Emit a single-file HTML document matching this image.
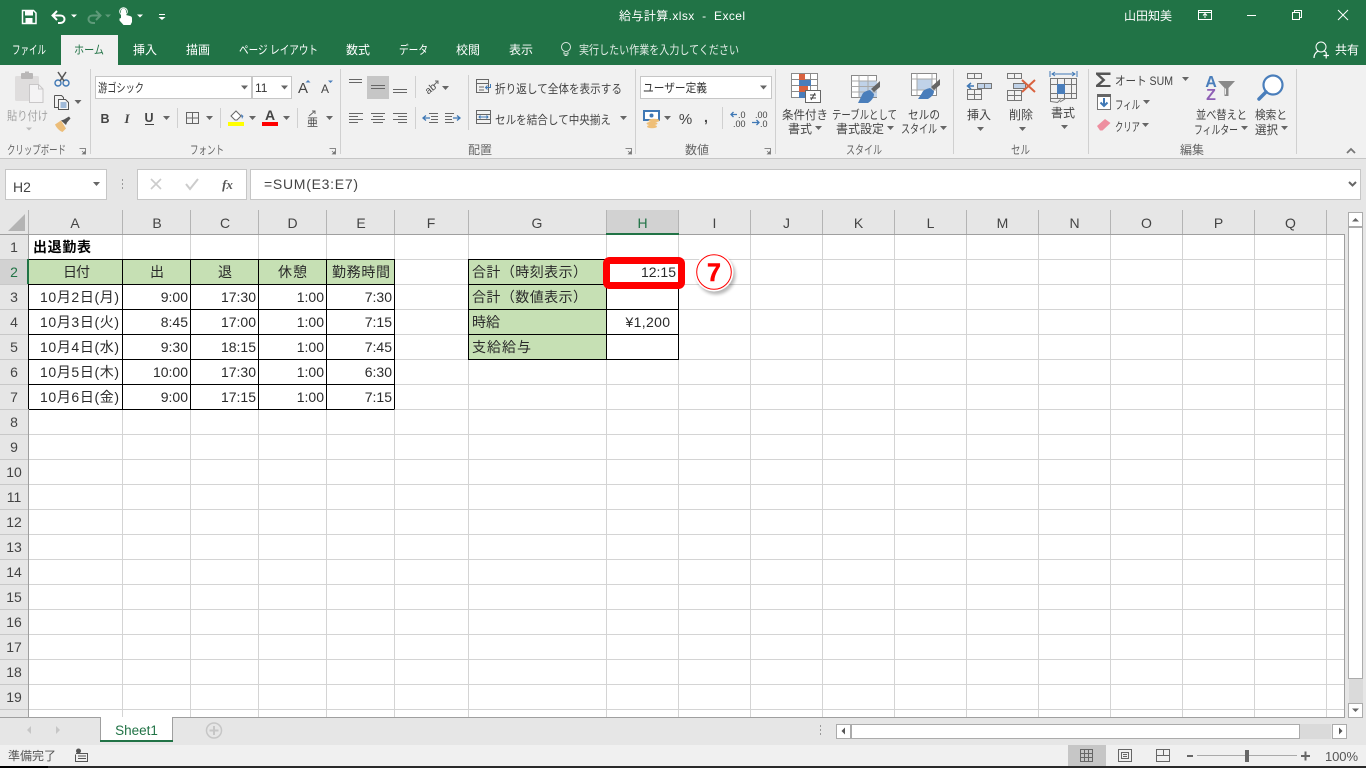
<!DOCTYPE html>
<html lang="ja"><head><meta charset="utf-8"><title>給与計算.xlsx - Excel</title>
<style>
html,body{margin:0;padding:0;width:1366px;height:768px;overflow:hidden;background:#fff}
svg{display:block;position:absolute;left:0;top:0}
text{font-family:"Liberation Sans","Noto Sans CJK JP",sans-serif;font-size:12px;fill:#444;white-space:pre}
.w text,text.w{fill:#fff}
.c{font-size:14px;fill:#2a2a2a}
.r{text-anchor:end}
.m{text-anchor:middle}
.h{font-size:14px;fill:#444;text-anchor:middle}
.s{fill:none;stroke:#666;stroke-width:1}
.l{fill:none;stroke:#666;stroke-width:1}
</style></head><body>
<svg width="1366" height="768" viewBox="0 0 1366 768" xmlns="http://www.w3.org/2000/svg">
<defs>
<path id="d" d="M-3.5-2h7L0 2z" fill="#666"/>
<path id="dl" d="M-3-1.500h6L0 1.500z" fill="#fff"/>
<g id="lc"><path d="M.5.500h6v6" fill="none" stroke="#888"/><path d="M3 3l3 3M6 3.500V6H3.500z" fill="#777" stroke="#777" stroke-width=".8"/></g>
<filter id="sh" x="-30%" y="-30%" width="160%" height="160%"><feGaussianBlur stdDeviation="1.500"/></filter>
</defs>

<!-- base -->
<rect width="1366" height="768" fill="#e6e6e6"/>
<rect width="1366" height="65" fill="#217346"/>
<rect y="65" width="1366" height="93" fill="#f1f1f1"/>
<rect y="158" width="1366" height="1" fill="#c6c6c6"/>
<rect x="61" y="35" width="57" height="31" fill="#f1f1f1"/>

<!-- QAT -->
<g>
<path d="M22.500 10.500h11l2.500 2.500v10.500H22.500z" fill="none" stroke="#fff" stroke-width="1.500"/>
<rect x="25" y="11" width="8" height="4.500" fill="#fff"/><rect x="25.500" y="18" width="7" height="5.500" fill="#fff"/>
<path d="M57 11l-4.500 4.500 4.500 4.500M53 15.500h7c3 0 4.500 1.800 4.500 3.700s-1.500 3.800-4.500 3.800h-2" fill="none" stroke="#fff" stroke-width="2"/>
<use href="#dl" x="74" y="16"/>
<path d="M96 11l4.500 4.500-4.500 4.500M100 15.500h-7c-3 0-4.500 1.800-4.500 3.700s1.500 3.800 4.500 3.800h2" fill="none" stroke="#5e9a79" stroke-width="2"/>
<path d="M105 14.500h6l-3 3z" fill="#5e9a79"/>
<path d="M121 18v-7a2.500 2.500 0 0 1 5 0v4l4 1c1.500.5 2 1 2 2.500v3.500l-1.500 3h-7l-4-4.500v-2z" fill="#fff"/>
<circle cx="123.500" cy="11.500" r="3.800" fill="none" stroke="#fff"/>
<use href="#dl" x="140" y="16"/>
<rect x="159" y="14" width="6" height="1" fill="#fff"/><path d="M158.500 17h7l-3.500 3z" fill="#fff"/>
</g>
<text class="w" x="619" y="20" textLength="126" lengthAdjust="spacing">給与計算.xlsx  -  Excel</text>
<text class="w" x="1124" y="20" textLength="48">山田知美</text>
<g fill="none" stroke="#fff">
<path d="M1198.500 10.500h13v9h-13zM1198.500 12.500h13M1205 18v-4M1203 15.500l2-2 2 2"/>
<path d="M1247 15.500h9"/>
<path d="M1292.500 12.500h7v7h-7zM1294.500 12.500v-2h7v7h-2"/>
<path d="M1338 10l10 10M1348 10l-10 10"/>
<circle cx="1321" cy="47" r="5"/>
<path d="M1314 58c0-4 2.500-6 4-7M1324 51c1 .5 2 1 2.500 2M1323.500 55.500h5.500M1326.200 53v5.500" stroke-width="1.200"/>
<circle cx="566" cy="47" r="4.500" stroke="#d9e7df"/><path d="M564 52v2h4v-2M564.500 55.500h3" stroke="#d9e7df"/>
</g>

<!-- tabs -->
<text class="w" x="12" y="54" textLength="34" lengthAdjust="spacingAndGlyphs">ファイル</text>
<text x="74" y="54" textLength="30" lengthAdjust="spacingAndGlyphs" style="fill:#217346">ホーム</text>
<text class="w" x="133" y="54" textLength="24">挿入</text>
<text class="w" x="186" y="54" textLength="24">描画</text>
<text class="w" x="239" y="54" textLength="79" lengthAdjust="spacingAndGlyphs">ページ レイアウト</text>
<text class="w" x="346" y="54" textLength="24">数式</text>
<text class="w" x="399" y="54" textLength="29" lengthAdjust="spacingAndGlyphs">データ</text>
<text class="w" x="456" y="54" textLength="24">校閲</text>
<text class="w" x="509" y="54" textLength="24">表示</text>
<text x="579" y="54" textLength="160" lengthAdjust="spacingAndGlyphs" style="fill:#e2ece6">実行したい作業を入力してください</text>
<text class="w" x="1335" y="54" textLength="24">共有</text>

<!-- group separators -->
<path d="M90.500 69v85M340.500 69v85M635.500 69v85M775.500 69v85M953.500 69v85M1088.500 69v85M1296.500 69v85" stroke="#d0d0d0"/>
<path d="M177.500 108v20M220.500 108v20M297.500 108v20M415.500 76v22M415.500 107v22M468.500 75v55M722.500 107v22" stroke="#d0d0d0"/>

<!-- clipboard -->
<rect x="15" y="76" width="24" height="25" rx="1.500" fill="#dfdddd"/>
<rect x="21" y="73" width="12" height="6" rx="1" fill="#b9b7b7"/><rect x="25" y="71.500" width="4" height="3" fill="#b9b7b7"/>
<path d="M29.500 84.500h9l4.500 4.500v13.500H29.500z" fill="#f4f3f4" stroke="#c9c7c8"/><path d="M38.500 84.500v4.500h4.500" fill="none" stroke="#c9c7c8"/>
<text x="7" y="120" textLength="41" lengthAdjust="spacingAndGlyphs" style="fill:#a3a3a3">貼り付け</text>
<path d="M26 127.500h6l-3 3z" fill="#bbb"/>
<g fill="none">
<circle cx="58" cy="83" r="3" stroke="#3f78b5" stroke-width="1.400"/><circle cx="66" cy="83" r="3" stroke="#3f78b5" stroke-width="1.400"/>
<path d="M58 72l6 9M66 72l-6 9" stroke="#555" stroke-width="1.500"/>
<path d="M54.500 95.500h7l2 2v2M54.500 95.500v12h4" stroke="#555"/>
<path d="M58.500 99.500h7l3 3v7h-10z" stroke="#555" fill="#f7f7f7"/>
<path d="M60.500 103h6M60.500 105h6M60.500 107h6" stroke="#4a7ebb"/>
</g>
<use href="#d" x="78" y="102"/>
<path d="M55 124.500l6-4 5 8-3.500 3.500c-3-1-6-4-7.500-7.500z" fill="#ecbd79"/>
<path d="M61 120.500l3-1 5-3 1.500 2-3.500 4-1 2.500z" fill="#555"/>
<text x="7" y="154" textLength="59" lengthAdjust="spacingAndGlyphs" style="fill:#666">クリップボード</text>
<use href="#lc" x="79" y="148"/>

<!-- font -->
<rect x="95.500" y="76.500" width="156" height="22" fill="#fff" stroke="#c6c6c6"/>
<rect x="252.500" y="76.500" width="39" height="22" fill="#fff" stroke="#c6c6c6"/>
<text x="98" y="92" textLength="46" lengthAdjust="spacingAndGlyphs" style="fill:#333">游ゴシック</text>
<text x="255" y="92" style="fill:#333">11</text>
<use href="#d" x="244.500" y="87.500"/><use href="#d" x="284.500" y="87.500"/>
<text x="303" y="93" class="m" style="font-size:15px">A</text><path d="M305.500 82.500h5l-2.500-2.500z" fill="#4a7ebb"/>
<text x="325" y="93" class="m" style="font-size:12px">A</text><path d="M328 80.500h5l-2.500 2.500z" fill="#4a7ebb"/>
<text x="105" y="123" class="m" style="font-weight:bold;font-size:12.500px">B</text>
<text x="127" y="123" class="m" style="font-style:italic;font-weight:bold;font-family:'Liberation Serif',serif;font-size:13px">I</text>
<text x="149" y="122" class="m" style="font-weight:bold;font-size:12.500px">U</text><rect x="145" y="124" width="9" height="1" fill="#444"/>
<use href="#d" x="166.500" y="118"/>
<path d="M186.500 112.500h12v11h-12zM192.500 112.500v11M186.500 118h12" class="s"/>
<use href="#d" x="209.500" y="118"/>
<path d="M231 116l5-5 5 5-4 4h-2z" fill="#fff" stroke="#666"/><path d="M241 114l2.500 2-1.500 3z" fill="#4a7ebb"/>
<rect x="228" y="122" width="16" height="4" fill="#ffff00"/>
<use href="#d" x="252.500" y="118"/>
<text x="270" y="120" class="m" style="font-weight:bold;font-size:14px">A</text>
<rect x="262" y="122" width="16" height="4" fill="#ff0000"/>
<use href="#d" x="286.500" y="118"/>
<path d="M309 116l6-5M312 111h3v3" class="s"/><text x="312.500" y="126" class="m" style="font-size:11px">亜</text>
<use href="#d" x="329.500" y="118"/>
<text x="190" y="154" textLength="34" lengthAdjust="spacingAndGlyphs" style="fill:#666">フォント</text>
<use href="#lc" x="329" y="148"/>

<!-- alignment -->
<rect x="367" y="76" width="22" height="23" fill="#c6c6c6"/>
<path d="M349 79.500h13M349 82.500h13M371 85.500h14M371 88.500h14M393 89.500h14M393 92.500h14M349 113.500h14M349 116.500h9M349 119.500h14M349 122.500h9M371 113.500h14M373 116.500h10M371 119.500h14M373 122.500h10M393 113.500h14M398 116.500h9M393 119.500h14M398 122.500h9" class="l"/>
<text x="430" y="92" class="m" transform="rotate(-40 430 88)" style="font-size:10px">ab</text>
<path d="M434 85l4-4M435 81h3v3" class="s"/>
<use href="#d" x="445.500" y="88"/>
<path d="M429 113.500h9M431 116.500h7M431 119.500h7M429 122.500h9" class="l"/><path d="M423 118h7M426 115.500l-3 2.500 3 2.500" fill="none" stroke="#3f78b5" stroke-width="1.300"/>
<path d="M451 113.500h9M451 116.500h7M451 119.500h7M451 122.500h9" class="l" transform="translate(-6 0)"/><path d="M453 118h7M457 115.500l3 2.500-3 2.500" fill="none" stroke="#3f78b5" stroke-width="1.300"/>
<path d="M476.500 79.500h12v13h-12zM476.500 83.500h12M479 87h5M479 90h5" class="s"/><path d="M490.500 84v3.500h-5M487.500 85.500l-2 2 2 2" fill="none" stroke="#3f78b5"/>
<text x="495" y="93" textLength="127" lengthAdjust="spacingAndGlyphs">折り返して全体を表示する</text>
<path d="M476.500 110.500h14v13h-14zM476.500 114.500h14M476.500 119.500h14" class="s"/><path d="M479 117h9M480.500 115.500l-1.500 1.500 1.500 1.500M486.500 115.500l1.500 1.500-1.500 1.500" fill="none" stroke="#3f78b5"/>
<text x="495" y="124" textLength="116" lengthAdjust="spacingAndGlyphs">セルを結合して中央揃え</text>
<use href="#d" x="623.500" y="118"/>
<text x="468" y="154" textLength="24" style="fill:#666">配置</text>
<use href="#lc" x="625" y="148"/>

<!-- number -->
<rect x="640.500" y="76.500" width="131" height="22" fill="#fff" stroke="#c6c6c6"/>
<text x="643" y="92" textLength="64" lengthAdjust="spacingAndGlyphs" style="fill:#333">ユーザー定義</text>
<use href="#d" x="763.500" y="87.500"/>
<rect x="644" y="111" width="15" height="9" fill="#fff" stroke="#3f78b5" stroke-width="2"/><circle cx="651.500" cy="115.500" r="2" fill="#3f78b5"/>
<ellipse cx="654" cy="120.500" rx="5.500" ry="1.800" fill="#efbf78"/><ellipse cx="652" cy="123.500" rx="5.500" ry="1.800" fill="#efbf78"/><ellipse cx="652" cy="126.500" rx="5" ry="1.800" fill="#efbf78"/>
<use href="#d" x="667.500" y="118"/>
<text x="685.500" y="124" class="m" style="font-size:15px">%</text>
<text x="706" y="122" class="m" style="font-size:14px;font-weight:bold">,</text>
<path d="M731 114.500h6M733.500 112l-2.500 2.500 2.500 2.500" fill="none" stroke="#3f78b5" stroke-width="1.300"/>
<text x="738" y="118" style="font-size:9px">.0</text><text x="733" y="127" style="font-size:9px">.00</text>
<text x="755" y="118" style="font-size:9px">.00</text>
<path d="M752 122.500h7M756.500 120l2.500 2.500-2.500 2.500" fill="none" stroke="#3f78b5" stroke-width="1.300"/>
<text x="760" y="127" style="font-size:9px">.0</text>
<text x="685" y="154" textLength="24" style="fill:#666">数値</text>
<use href="#lc" x="764" y="148"/>

<!-- styles -->
<g>
<path d="M791.500 73.500h26v24h-26zM791.500 79.500h26M791.500 85.500h26M791.500 91.500h26M799.500 73.500v24M810.500 73.500v24" fill="#fff" stroke="#8a8a8a"/>
<rect x="799" y="74" width="6" height="6" fill="#d9623f"/><rect x="799" y="80" width="12" height="6" fill="#4a7ebb"/><rect x="799" y="86" width="9" height="6" fill="#d9623f"/><rect x="799" y="92" width="6" height="6" fill="#4a7ebb"/>
<rect x="805.500" y="90.500" width="15" height="12" fill="#fff" stroke="#666"/>
<path d="M810 95h6M810 98h6M815 93l-4 7" fill="none" stroke="#444"/>
<rect x="851.500" y="75.500" width="25" height="22" fill="#fff" stroke="#8a8a8a"/>
<rect x="859" y="81" width="18" height="16" fill="#c0d2e8"/>
<path d="M851.500 81h25M851.500 86.500h25M851.500 92h25M859 75.500v22M868 75.500v22" fill="none" stroke="#a9a9a9"/>
<path d="M880 81l-9 8 3 3 6-5z" fill="#666"/><path d="M870 90c-4 1-7 2-8 5l-4 8h10c3-2 6-5 6-9z" fill="#4a7ebb"/>
<rect x="911.500" y="73.500" width="25" height="22" fill="#fff" stroke="#8a8a8a"/>
<rect x="917" y="79" width="15" height="11" fill="#c0d2e8"/>
<path d="M911.500 79h25M911.500 90h25M917 73.500v22M932 73.500v22" fill="none" stroke="#a9a9a9"/>
<path d="M940 79l-9 8 3 3 6-5z" fill="#666"/><path d="M930 88c-4 1-7 2-8 5l-4 6h10c3-2 6-4 6-8z" fill="#4a7ebb"/>
</g>
<text x="782" y="119" textLength="46" lengthAdjust="spacingAndGlyphs">条件付き</text>
<text x="788" y="133" textLength="24">書式</text><use href="#d" x="818.500" y="128"/>
<text x="832" y="119" textLength="65" lengthAdjust="spacingAndGlyphs">テーブルとして</text>
<text x="836" y="133" textLength="48">書式設定</text><use href="#d" x="890.500" y="128"/>
<text x="908" y="119" textLength="32" lengthAdjust="spacingAndGlyphs">セルの</text>
<text x="901" y="133" textLength="36" lengthAdjust="spacingAndGlyphs">スタイル</text><use href="#d" x="943.500" y="128"/>
<text x="846" y="154" textLength="36" lengthAdjust="spacingAndGlyphs" style="fill:#666">スタイル</text>

<!-- cells -->
<g fill="none" stroke="#777">
<path d="M967.500 73.500h14v5h-14zM974.500 73.500v5M967.500 89.500h14v10h-14zM967.500 94.500h14M974.500 89.500v10"/>
<path d="M977.500 83.500h14v5h-14zM984.500 83.500v5" fill="#c0d2e8"/>
<path d="M1007.500 73.500h14v5h-14zM1014.500 73.500v5M1007.500 90.500h14v10h-14zM1007.500 95.500h14M1014.500 90.500v10"/>
<path d="M1013.500 83.500h12v5h-12z" fill="#c0d2e8"/>
<path d="M1050.500 78.500h26v20h-26zM1050.500 84.500h26M1050.500 93.500h26M1057.500 78.500v20M1064.500 78.500v20M1071.500 78.500v20"/>
<path d="M1050.500 98.500v3l7 1 3-3M1060 102l5-3"/>
</g>
<path d="M974 86h-6M971 83l-3.500 3 3.500 3" fill="none" stroke="#3f78b5" stroke-width="1.500"/>
<path d="M1022 80l13 12M1035 80l-13 12" stroke="#d9623f" stroke-width="2"/>
<rect x="1057" y="84" width="8" height="10" fill="#4a7ebb"/>
<path d="M1050 71v6M1077 71v6M1052 74h23M1055 72l-3 2 3 2M1072 72l3 2-3 2" fill="none" stroke="#3f78b5"/>
<text x="967" y="119" textLength="24">挿入</text><use href="#d" x="980.500" y="129"/>
<text x="1009" y="119" textLength="24">削除</text><use href="#d" x="1022.500" y="129"/>
<text x="1051" y="117" textLength="24">書式</text><use href="#d" x="1064.500" y="127"/>
<text x="1011" y="154" textLength="19" lengthAdjust="spacingAndGlyphs" style="fill:#666">セル</text>

<!-- editing -->
<path d="M1096 72.500h14.500v2.500H1100l5.500 5-5.500 5h10.500v2H1096v-2l6-5-6-5.500z" fill="#555"/>
<text x="1115" y="85" textLength="58" lengthAdjust="spacingAndGlyphs">オート SUM</text><use href="#d" x="1185.500" y="79"/>
<rect x="1097.500" y="94.500" width="13" height="15" fill="#fff" stroke="#777"/><rect x="1097" y="94" width="14" height="3" fill="#666"/>
<path d="M1104 98v8M1100.500 102.500l3.500 3.500 3.500-3.500" fill="none" stroke="#3f78b5" stroke-width="2"/>
<text x="1115" y="109" textLength="25" lengthAdjust="spacingAndGlyphs">フィル</text><use href="#d" x="1146.500" y="102"/>
<path d="M1097 126l8-7 5.500 4-8 7.500h-2.500z" fill="#ee8fa0"/>
<text x="1115" y="131" textLength="25" lengthAdjust="spacingAndGlyphs">クリア</text><use href="#d" x="1145.500" y="125"/>
<text x="1211" y="87" class="m" style="font-size:16px;font-weight:bold;fill:#4a7ebb">A</text>
<text x="1211" y="100" class="m" style="font-size:16px;font-weight:bold;fill:#8e5fb5">Z</text>
<path d="M1218 81h17l-6.500 7v8h-4v-8z" fill="#8a8a8a"/><path d="M1225.500 88.500v6" stroke="#eee"/>
<text x="1196" y="119" textLength="51" lengthAdjust="spacingAndGlyphs">並べ替えと</text>
<text x="1194" y="134" textLength="44" lengthAdjust="spacingAndGlyphs">フィルター</text><use href="#d" x="1244.500" y="128"/>
<circle cx="1273" cy="85" r="9.500" fill="#fff" stroke="#4a7ebb" stroke-width="2.200"/>
<path d="M1266 92l-7 7" stroke="#4a7ebb" stroke-width="3.500" stroke-linecap="round"/>
<text x="1255" y="119" textLength="32" lengthAdjust="spacingAndGlyphs">検索と</text>
<text x="1255" y="134" textLength="23" lengthAdjust="spacingAndGlyphs">選択</text><use href="#d" x="1284.500" y="128"/>
<text x="1180" y="154" textLength="24" style="fill:#666">編集</text>
<path d="M1347 153l4-4 4 4" fill="none" stroke="#777" stroke-width="1.800"/>

<!-- formula bar -->
<rect x="5.500" y="169.500" width="101" height="30" fill="#fff" stroke="#c6c6c6"/>
<text x="13" y="192" style="font-size:14px">H2</text>
<use href="#d" x="96.500" y="184"/>
<path d="M122 180h1M122 184h1M122 188h1" stroke="#999" stroke-width="2"/>
<rect x="137.500" y="169.500" width="109" height="30" fill="#fff" stroke="#c6c6c6"/>
<path d="M151 179l10 10M161 179l-10 10" stroke="#ccc" stroke-width="1.600"/>
<path d="M186 184l4 5 8-10" fill="none" stroke="#ccc" stroke-width="2"/>
<text x="227.500" y="189" class="m" style="font-family:'Liberation Serif',serif;font-style:italic;font-weight:bold;font-size:13px;fill:#555">fx</text>
<rect x="250.500" y="169.500" width="1110" height="30" fill="#fff" stroke="#c6c6c6"/>
<text x="264" y="189" textLength="94" style="font-size:14px">=SUM(E3:E7)</text>
<path d="M1349 182l3.500 3.500 3.500-3.500" fill="none" stroke="#666" stroke-width="2"/>

<!-- sheet -->
<rect x="28" y="234" width="1316" height="483" fill="#fff"/>
<rect y="234" width="28" height="483" fill="#e6e6e6"/>
<rect x="606" y="210" width="72" height="24" fill="#d2d2d2"/>
<rect y="259" width="28" height="25" fill="#d2d2d2"/>
<path d="M25 214v17H8z" fill="#b4b4b4"/>
<path d="M28.500 210v24M122.500 210v24M190.500 210v24M258.500 210v24M326.500 210v24M394.500 210v24M468.500 210v24M606.500 210v24M678.500 210v24M750.500 210v24M822.500 210v24M894.500 210v24M966.500 210v24M1038.500 210v24M1110.500 210v24M1182.500 210v24M1254.500 210v24M1326.500 210v24" stroke="#b4b4b4"/>
<path d="M122.500 234v483M190.500 234v483M258.500 234v483M326.500 234v483M394.500 234v483M468.500 234v483M606.500 234v483M678.500 234v483M750.500 234v483M822.500 234v483M894.500 234v483M966.500 234v483M1038.500 234v483M1110.500 234v483M1182.500 234v483M1254.500 234v483M1326.500 234v483" stroke="#d4d4d4"/>
<path d="M29 259.500h1315M29 284.500h1315M29 309.500h1315M29 334.500h1315M29 359.500h1315M29 384.500h1315M29 409.500h1315M29 434.500h1315M29 459.500h1315M29 484.500h1315M29 509.500h1315M29 534.500h1315M29 559.500h1315M29 584.500h1315M29 609.500h1315M29 634.500h1315M29 659.500h1315M29 684.500h1315M29 709.500h1315" stroke="#d4d4d4"/>
<path d="M0 259.500h28M0 284.500h28M0 309.500h28M0 334.500h28M0 359.500h28M0 384.500h28M0 409.500h28M0 434.500h28M0 459.500h28M0 484.500h28M0 509.500h28M0 534.500h28M0 559.500h28M0 584.500h28M0 609.500h28M0 634.500h28M0 659.500h28M0 684.500h28M0 709.500h28" stroke="#c8c8c8"/>
<path d="M0 234.500h1344.500V717M28.500 234v483" fill="none" stroke="#9f9f9f"/>
<rect x="606" y="233" width="73" height="2" fill="#217346"/>
<rect x="27" y="259" width="2" height="25" fill="#217346"/>

<!-- fills -->
<rect x="29" y="260" width="365" height="24" fill="#c6e0b4"/>
<rect x="469" y="260" width="137" height="99" fill="#c6e0b4"/>
<path d="M122.500 259v150M190.500 259v150M258.500 259v150M326.500 259v150M394.500 259v150M28.500 284v125M29 259.500h365.500M29 284.500h365.500M29 309.500h365.500M29 334.500h365.500M29 359.500h365.500M29 384.500h365.500M29 409.500h365.500M468.500 259v100M606.500 259v100M678.500 259v100M468 259.500h211M468 284.500h211M468 309.500h211M468 334.500h211M468 359.500h211" fill="none" stroke="#000"/>

<!-- column headers -->
<text class="h" x="75" y="228">A</text><text class="h" x="157" y="228">B</text><text class="h" x="225" y="228">C</text><text class="h" x="292.500" y="228">D</text><text class="h" x="361" y="228">E</text><text class="h" x="431" y="228">F</text><text class="h" x="537" y="228">G</text><text class="h" x="642.500" y="228" style="fill:#217346">H</text><text class="h" x="714.500" y="228">I</text><text class="h" x="786.500" y="228">J</text><text class="h" x="858.500" y="228">K</text><text class="h" x="930.500" y="228">L</text><text class="h" x="1002.500" y="228">M</text><text class="h" x="1074.500" y="228">N</text><text class="h" x="1146.500" y="228">O</text><text class="h" x="1218.500" y="228">P</text><text class="h" x="1290.500" y="228">Q</text>
<!-- row headers -->
<text class="h" x="14" y="252">1</text><text class="h" x="14" y="277" style="fill:#217346">2</text><text class="h" x="14" y="302">3</text><text class="h" x="14" y="327">4</text><text class="h" x="14" y="352">5</text><text class="h" x="14" y="377">6</text><text class="h" x="14" y="402">7</text><text class="h" x="14" y="427">8</text><text class="h" x="14" y="452">9</text><text class="h" x="14" y="477">10</text><text class="h" x="14" y="502">11</text><text class="h" x="14" y="527">12</text><text class="h" x="14" y="552">13</text><text class="h" x="14" y="577">14</text><text class="h" x="14" y="602">15</text><text class="h" x="14" y="627">16</text><text class="h" x="14" y="652">17</text><text class="h" x="14" y="677">18</text><text class="h" x="14" y="702">19</text><text class="h" x="14" y="727">20</text>

<!-- cell text -->
<text class="c" x="33" y="252" textLength="58" style="font-weight:bold;fill:#000">出退勤表</text>
<text class="c" x="63" y="277" textLength="27">日付</text>
<text class="c" x="150" y="277">出</text>
<text class="c" x="218" y="277">退</text>
<text class="c" x="278" y="277" textLength="29">休憩</text>
<text class="c" x="332" y="277" textLength="58">勤務時間</text>

<text class="c" x="40" y="302" textLength="79">10月2日(月)</text>
<text class="c" x="40" y="327" textLength="79">10月3日(火)</text>
<text class="c" x="40" y="352" textLength="79">10月4日(水)</text>
<text class="c" x="40" y="377" textLength="79">10月5日(木)</text>
<text class="c" x="40" y="402" textLength="79">10月6日(金)</text>
<text class="c r" x="188" y="302">9:00</text><text class="c r" x="188" y="327">8:45</text><text class="c r" x="188" y="352">9:30</text><text class="c r" x="188" y="377">10:00</text><text class="c r" x="188" y="402">9:00</text>
<text class="c r" x="256" y="302">17:30</text><text class="c r" x="256" y="327">17:00</text><text class="c r" x="256" y="352">18:15</text><text class="c r" x="256" y="377">17:30</text><text class="c r" x="256" y="402">17:15</text>
<text class="c r" x="324" y="302">1:00</text><text class="c r" x="324" y="327">1:00</text><text class="c r" x="324" y="352">1:00</text><text class="c r" x="324" y="377">1:00</text><text class="c r" x="324" y="402">1:00</text>
<text class="c r" x="392" y="302">7:30</text><text class="c r" x="392" y="327">7:15</text><text class="c r" x="392" y="352">7:45</text><text class="c r" x="392" y="377">6:30</text><text class="c r" x="392" y="402">7:15</text>

<text class="c" x="472" y="277" textLength="115">合計（時刻表示）</text>
<text class="c" x="472" y="302" textLength="115">合計（数値表示）</text>
<text class="c" x="472" y="327" textLength="28">時給</text>
<text class="c" x="472" y="352" textLength="59">支給給与</text>
<text class="c r" x="676" y="277">12:15</text>
<text class="c" x="625.500" y="327" textLength="44.500">¥1,200</text>

<!-- callout -->
<rect x="606.500" y="260.500" width="75" height="25" rx="3" fill="none" stroke="#ff0000" stroke-width="7"/>
<circle cx="716" cy="275" r="19.500" fill="#000" opacity=".28" filter="url(#sh)"/>
<circle cx="714" cy="272" r="19.500" fill="#fff"/>
<circle cx="714" cy="272" r="17.300" fill="#fff" stroke="#f00" stroke-width="1"/>
<text x="714" y="281" class="m" style="font-size:25px;font-weight:bold;fill:#f00;stroke:#f00;stroke-width:.5">7</text>

<!-- tab bar -->
<rect y="717" width="1366" height="28" fill="#e6e6e6"/>
<path d="M0 717.500h1345" stroke="#9f9f9f"/>
<rect x="1345" y="210" width="21" height="507" fill="#e6e6e6"/>
<rect x="100.500" y="717.500" width="72" height="24" fill="#fff" stroke="#9f9f9f"/>
<rect x="101" y="717" width="71" height="2" fill="#fff"/>
<rect x="100" y="740" width="73" height="2" fill="#217346"/>
<text x="136.500" y="735" class="m" style="font-size:13.500px;fill:#217346">Sheet1</text>
<path d="M31 726v8l-4-4zM56 726v8l4-4z" fill="#c6c6c6"/>
<circle cx="214" cy="730.500" r="7.500" fill="none" stroke="#c6c6c6" stroke-width="1.500"/>
<path d="M214 726v9M209.500 730.500h9" stroke="#c6c6c6" stroke-width="2"/>
<path d="M820 726h1M820 730h1M820 734h1" stroke="#999" stroke-width="2"/>

<!-- h scrollbar -->
<rect x="836.500" y="724.500" width="14" height="14" fill="#fff" stroke="#ababab"/>
<path d="M845 727.500v7l-3.500-3.500z" fill="#555"/>
<rect x="851.500" y="724.500" width="448" height="14" fill="#fff" stroke="#ababab"/>
<rect x="1300" y="724" width="31" height="15" fill="#dadada"/>
<rect x="1332.500" y="724.500" width="14" height="14" fill="#fff" stroke="#ababab"/>
<path d="M1339 727.500v7l3.500-3.500z" fill="#555"/>

<!-- v scrollbar -->
<rect x="1348.500" y="212.500" width="14" height="14" fill="#fff" stroke="#ababab"/>
<path d="M1352 221.500h7l-3.500-3.500z" fill="#666"/>
<rect x="1348.500" y="227.500" width="14" height="451" fill="#fff" stroke="#ababab"/>
<rect x="1349" y="679" width="14" height="25" fill="#dadada"/>
<rect x="1348.500" y="703.500" width="14" height="14" fill="#fff" stroke="#ababab"/>
<path d="M1352 708.500h7l-3.500 3.500z" fill="#666"/>

<!-- status bar -->
<rect y="745" width="1366" height="21" fill="#f0f0f0"/>
<rect y="766" width="1366" height="2" fill="#2a2a2a"/><rect width="48" y="766" height="2" fill="#000"/>
<text x="8" y="760" textLength="48" style="fill:#555">準備完了</text>
<circle cx="78.500" cy="751" r="2.500" fill="#555"/>
<path d="M76 753.500h11.500v8h-12v-7M78 756h8M78 758.500h8" fill="none" stroke="#555"/>
<rect x="1068" y="745" width="38" height="21" fill="#c6c6c6"/>
<path d="M1080.500 749.500h12v12h-12zM1084.500 749.500v12M1088.500 749.500v12M1080.500 753.500h12M1080.500 757.500h12" class="s"/>
<path d="M1118.500 749.500h13v12h-13zM1121.500 752.500h7v6h-7zM1123 754.500h4M1123 756.500h4" class="s"/>
<path d="M1156.500 749.500h13v12h-13zM1156.500 755.500h7v-6M1163.500 755.500h6" class="s"/>
<path d="M1187 756h6" stroke="#666" stroke-width="2"/>
<path d="M1197 755.500h100" stroke="#aaa"/>
<rect x="1245" y="750" width="4" height="12" fill="#666"/>
<path d="M1301 756h9M1305.500 751.500v9" stroke="#666" stroke-width="2"/>
<text x="1325" y="761" textLength="33" style="font-size:13px;fill:#555">100%</text>
</svg>
</body></html>
